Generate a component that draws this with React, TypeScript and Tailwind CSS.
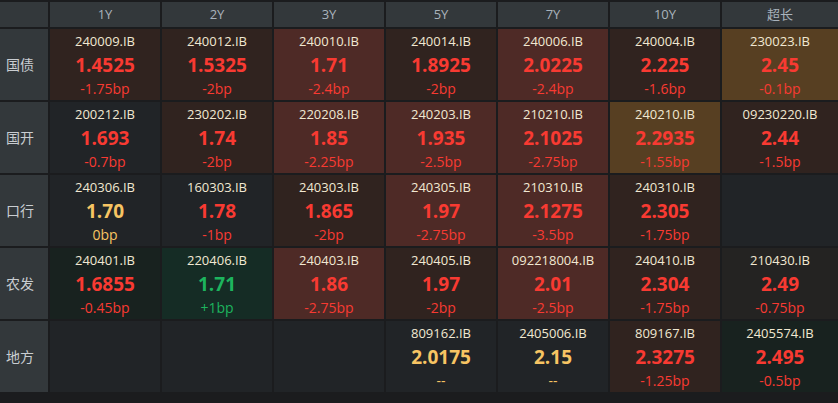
import React from 'react';

type Tone = 'red' | 'brown' | 'gold' | 'plain' | 'green' | 'dgreen' | 'gray';

interface Cell {
  code: string;
  yield: string;
  bp: string;
  tone: Tone;
  color?: 'red' | 'gold' | 'green';
}

const TERMS = ['1Y', '2Y', '3Y', '5Y', '7Y', '10Y', '超长'];

const TONE_BG: Record<Tone, string> = {
  red: 'bg-[#4e2a26]',
  brown: 'bg-[#30231f]',
  gold: 'bg-[#573f22]',
  plain: 'bg-[#212427]',
  green: 'bg-[#152c25]',
  dgreen: 'bg-[#18221f]',
  gray: 'bg-[#242322]',
};

const TEXT: Record<'red' | 'gold' | 'green', string> = {
  red: 'text-[#f83a32]',
  gold: 'text-[#f7c463]',
  green: 'text-[#1db45e]',
};

const ROWS: { name: string; cells: (Cell | null)[] }[] = [
  {
    name: '国债',
    cells: [
      { code: '240009.IB', yield: '1.4525', bp: '-1.75bp', tone: 'brown' },
      { code: '240012.IB', yield: '1.5325', bp: '-2bp', tone: 'brown' },
      { code: '240010.IB', yield: '1.71', bp: '-2.4bp', tone: 'red' },
      { code: '240014.IB', yield: '1.8925', bp: '-2bp', tone: 'brown' },
      { code: '240006.IB', yield: '2.0225', bp: '-2.4bp', tone: 'red' },
      { code: '240004.IB', yield: '2.225', bp: '-1.6bp', tone: 'brown' },
      { code: '230023.IB', yield: '2.45', bp: '-0.1bp', tone: 'gold' },
    ],
  },
  {
    name: '国开',
    cells: [
      { code: '200212.IB', yield: '1.693', bp: '-0.7bp', tone: 'plain' },
      { code: '230202.IB', yield: '1.74', bp: '-2bp', tone: 'brown' },
      { code: '220208.IB', yield: '1.85', bp: '-2.25bp', tone: 'red' },
      { code: '240203.IB', yield: '1.935', bp: '-2.5bp', tone: 'red' },
      { code: '210210.IB', yield: '2.1025', bp: '-2.75bp', tone: 'red' },
      { code: '240210.IB', yield: '2.2935', bp: '-1.55bp', tone: 'gold' },
      { code: '09230220.IB', yield: '2.44', bp: '-1.5bp', tone: 'brown' },
    ],
  },
  {
    name: '口行',
    cells: [
      { code: '240306.IB', yield: '1.70', bp: '0bp', tone: 'plain', color: 'gold' },
      { code: '160303.IB', yield: '1.78', bp: '-1bp', tone: 'plain' },
      { code: '240303.IB', yield: '1.865', bp: '-2bp', tone: 'brown' },
      { code: '240305.IB', yield: '1.97', bp: '-2.75bp', tone: 'red' },
      { code: '210310.IB', yield: '2.1275', bp: '-3.5bp', tone: 'red' },
      { code: '240310.IB', yield: '2.305', bp: '-1.75bp', tone: 'brown' },
      null,
    ],
  },
  {
    name: '农发',
    cells: [
      { code: '240401.IB', yield: '1.6855', bp: '-0.45bp', tone: 'dgreen' },
      { code: '220406.IB', yield: '1.71', bp: '+1bp', tone: 'green', color: 'green' },
      { code: '240403.IB', yield: '1.86', bp: '-2.75bp', tone: 'red' },
      { code: '240405.IB', yield: '1.97', bp: '-2bp', tone: 'brown' },
      { code: '092218004.IB', yield: '2.01', bp: '-2.5bp', tone: 'red' },
      { code: '240410.IB', yield: '2.304', bp: '-1.75bp', tone: 'brown' },
      { code: '210430.IB', yield: '2.49', bp: '-0.75bp', tone: 'gray' },
    ],
  },
  {
    name: '地方',
    cells: [
      null,
      null,
      null,
      { code: '809162.IB', yield: '2.0175', bp: '--', tone: 'plain', color: 'gold' },
      { code: '2405006.IB', yield: '2.15', bp: '--', tone: 'plain', color: 'gold' },
      { code: '809167.IB', yield: '2.3275', bp: '-1.25bp', tone: 'brown' },
      { code: '2405574.IB', yield: '2.495', bp: '-0.5bp', tone: 'dgreen' },
    ],
  },
];

function YieldCell({ cell }: { cell: Cell | null }) {
  if (!cell) return <div className="bg-[#212427]" />;
  const color = TEXT[cell.color ?? 'red'];
  return (
    <div className={`flex flex-col items-center ${TONE_BG[cell.tone]}`}>
      <div className="mt-[3px] text-[13px] leading-[18px] text-[#f1e8d2]">{cell.code}</div>
      <div className={`mt-[3px] text-[19px] font-bold leading-[24px] ${color}`}>{cell.yield}</div>
      <div className={`mt-[2px] text-[14px] leading-[20px] ${color}`}>{cell.bp}</div>
    </div>
  );
}

export default function App() {
  return (
    <div
      className="h-[403px] w-[838px] overflow-hidden bg-[#1b1c1e] pt-[2px]"
      style={{ fontFamily: '"Open Sans", "Noto Sans CJK SC", sans-serif' }}
    >
      <div className="grid grid-cols-[48px_repeat(6,110px)_1fr] grid-rows-[25px_repeat(5,71px)] gap-[2px]">
        {/* Header */}
        <div className="bg-[#33383b]" />
        {TERMS.map((t) => (
          <div
            key={t}
            className="flex items-center justify-center bg-[#33383b] text-[13px] text-[#a9b3bc]"
          >
            {t}
          </div>
        ))}

        {/* Rows */}
        {ROWS.map((row) => (
          <React.Fragment key={row.name}>
            <div className="flex items-center pl-[6px] bg-[#33383b] text-[14px] text-[#c9cdd1]">
              {row.name}
            </div>
            {row.cells.map((c, i) => (
              <YieldCell key={i} cell={c} />
            ))}
          </React.Fragment>
        ))}
      </div>
    </div>
  );
}
